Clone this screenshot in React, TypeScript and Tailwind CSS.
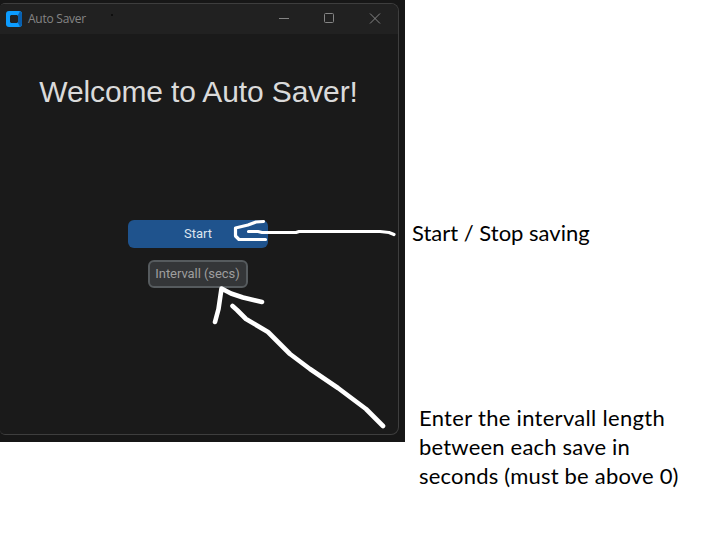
function TitleBar() {
  return (
    <header className="flex h-[30px] items-center bg-[#212121] pl-[6px]">
      <svg width="16" height="16" viewBox="0 0 16 16" className="shrink-0">
        <rect width="16" height="16" rx="3" fill="#0c9cff" />
        <path d="M12 4L14 0.2a3 3 0 0 1 2 2.8v10a3 3 0 0 1-2 2.8L12 12z" fill="#0860b0" />
        <path d="M5 4h6l1 1v6l-1 1H5l-1-1V5z" fill="#212121" />
      </svg>
      <h2 className="ml-[6px] grow font-['Open_Sans',sans-serif] text-[12px] leading-[16px] tracking-[-0.25px] text-[#858585]">
        Auto Saver
      </h2>
      <svg width="102" height="12" viewBox="0 0 102 12" fill="none" stroke="#858585" className="mr-[17px] shrink-0">
        <path d="M0 5.5h10" />
        <rect x="45.5" y="0.5" width="9" height="9" rx="1" />
        <path d="M91 0.5l10 10M101 0.5L91 10.5" />
      </svg>
    </header>
  );
}

function AppWindow() {
  return (
    <section className="h-[442px] w-[405px] shrink-0 bg-[#171717] pt-[3px]">
      <div className="h-[432px] w-[399px] overflow-hidden rounded-r-[8px] rounded-l-[5px] border-y border-r border-[#3e3e3e] bg-[#1a1a1a]">
        <TitleBar />
        <div className="flex w-[396px] flex-col items-center">
          <h1 className="mt-[40px] pl-px text-center font-['Liberation_Sans',Arial,sans-serif] text-[30px] leading-[36px] tracking-[-0.13px] whitespace-nowrap text-[#dadada]">
            Welcome to Auto Saver!
          </h1>
          <button className="mt-[110px] h-[28px] w-[140px] rounded-[6px] bg-[#1f538d] font-['Roboto',sans-serif] text-[13px] leading-[28px] text-[#dce4ee]">
            Start
          </button>
          <div className="mt-[12px] h-[28px] w-[100px] rounded-[6px] border-2 border-[#565b5e] bg-[#343638] pr-px text-center font-['Roboto',sans-serif] text-[13px] leading-[24px] tracking-[-0.06px] whitespace-nowrap text-[#9e9e9e]">
            Intervall (secs)
          </div>
        </div>
      </div>
    </section>
  );
}

function Arrows() {
  return (
    <svg
      className="pointer-events-none absolute top-0 left-0"
      width="405"
      height="442"
      viewBox="0 0 405 442"
      fill="none"
      stroke="#fff"
      strokeWidth="3.2"
      strokeLinecap="round"
      strokeLinejoin="round"
    >
      <path d="M263.5 221.5L256 222L248 225L235.5 228L235.5 236L239 239.5H265.5" />
      <path d="M248.5 231.5H258L262 232.5H296L299 231.5H380L389 232.5L394 234.5" />
      <g strokeWidth="4.6">
        <path d="M215 322L218.5 309L221.5 288.5L231 293.5L243 297.5L262 302" />
        <path d="M232.5 306L237 310L246 319L268 332L290 354L310 369L338 388L366 409L383 426" />
      </g>
      <circle cx="112" cy="15" r="1" fill="#080808" stroke="none" />
    </svg>
  );
}

export default function App() {
  return (
    <main className="relative flex h-[557px] w-[710px] overflow-hidden bg-white">
      <AppWindow />
      <aside className="flex flex-col font-['Lato',sans-serif] text-[22px] leading-[29px] whitespace-nowrap text-black">
        <p className="mt-[218px] ml-[7px]">Start / Stop saving</p>
        <div className="mt-[156px] ml-[14px]">
          <p className="tracking-[0.3px]">Enter the intervall length</p>
          <p className="tracking-[0.2px]">between each save in</p>
          <p className="tracking-[0.2px]">seconds (must be above 0)</p>
        </div>
      </aside>
      <Arrows />
    </main>
  );
}
